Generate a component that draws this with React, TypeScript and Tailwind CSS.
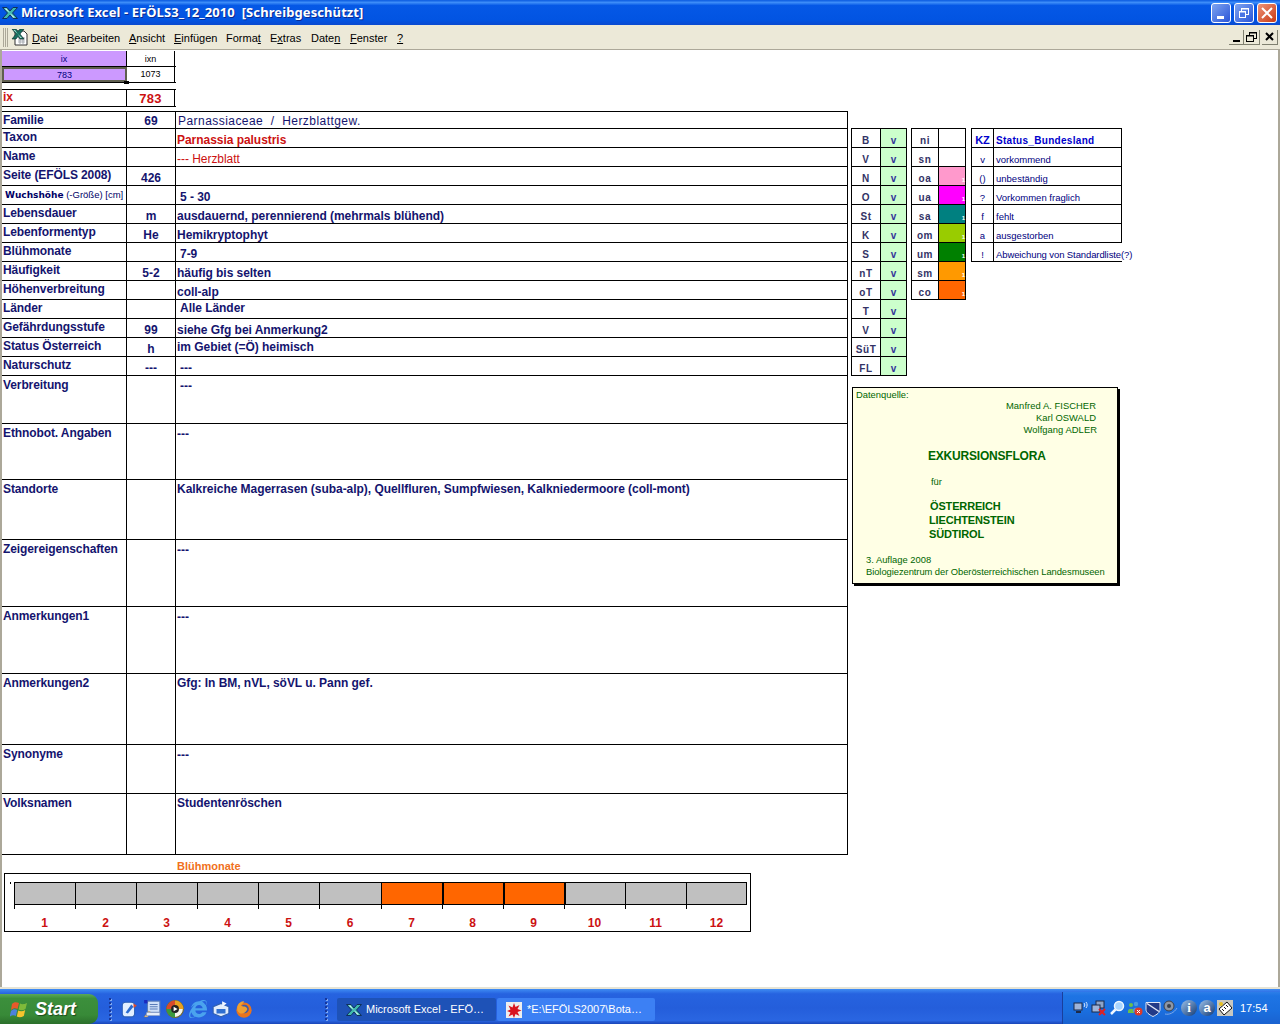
import React from "react";
import { FaInternetExplorer } from "react-icons/fa";

const XLogo = ({ s = 16 }: { s?: number }) => (
  <svg width={s} height={s} viewBox="0 0 16 16">
    <path d="M0.5 2.500h4.500l3 3.500 3-3.500h4.500l-5 5.500 5 5.500h-4.500l-3-3.500-3 3.500H.5l5-5.500z" fill="#3fb8ae" stroke="#10305c" strokeWidth="1" />
    <path d="M2.500 3.500h2l6.500 9h2z" fill="#dff6f2" />
  </svg>
);

const Flag = () => (
  <svg width="20" height="20" viewBox="0 0 20 20">
    <path d="M2 5c2-2 4-2 7-1l-1.500 6c-2-1-4-1-6.500 1z" fill="#e8592b" />
    <path d="M10 4.500c2 1 4 1 7-.5l-1.500 6c-2.500 1.500-5 1.500-7 .5z" fill="#7fba3a" />
    <path d="M1 12c2-2 4-2 6.200-1l-1.400 6c-2-1-4-1-6.300 1z" fill="#4c82dc" />
    <path d="M8.200 11.500c2 1 4.500 1 7-.5l-1.400 6c-2.500 1.500-5 1.500-7 .5z" fill="#f6c42e" />
  </svg>
);

const Grip = () => (
  <div className="flex flex-col gap-[2px] w-[3px]">
    {[0, 1, 2, 3, 4, 5].map((i) => (
      <div key={i} className="w-[2px] h-[2px] bg-[#17389c] shadow-[1px_1px_0_#7fa8f0]" />
    ))}
  </div>
);

const Quick = () => (
  <div className="flex items-center gap-[5px]">
    <svg width="18" height="18" viewBox="0 0 16 16"><rect x="2" y="2" width="11" height="13" rx="3" fill="#e2efff" stroke="#2b5fb8" /><path d="M5 11l5-7 2 2-5 6z" fill="#2b6cd0" /><path d="M12 3l3 2-3 2z" fill="#e04a2a" /></svg>
    <svg width="18" height="18" viewBox="0 0 16 16"><rect x="4" y="1" width="11" height="10" fill="#cfe0f8" stroke="#5a7cb8" /><path d="M6 4h7M6 6h7M6 8h7" stroke="#5a7cb8" /><rect x="1" y="0" width="3" height="3" fill="#1a2ac0" /><path d="M1 15l4-5 2 1-3 4z" fill="#f0d8a8" stroke="#a07a40" strokeWidth=".5" /><rect x="3" y="11" width="12" height="3" fill="#e6eefa" stroke="#6b86b8" strokeWidth=".5" /></svg>
    <svg width="18" height="18" viewBox="0 0 16 16"><circle cx="8" cy="8" r="7.500" fill="#f4f4ea" stroke="#706428" /><path d="M8 .5a7.500 7.500 0 0 1 7.500 7.500H11a3 3 0 0 0-3-3z" fill="#e8a020" /><path d="M8 15.500A7.500 7.500 0 0 1 .5 8H5a3 3 0 0 0 3 3z" fill="#3a9a3c" /><path d="M.5 8A7.500 7.500 0 0 1 8 .5V5a3 3 0 0 0-3 3z" fill="#d84a2c" /><circle cx="8" cy="8" r="3.500" fill="#222" /><path d="M6.800 6l3.500 2-3.500 2z" fill="#fff" /></svg>
    <FaInternetExplorer size={18} color="#4aa3ee" />
    <svg width="18" height="18" viewBox="0 0 16 16"><path d="M1 6l7-3 7 3v6l-7 3-7-3z" fill="#e2edfc" stroke="#2f5fb0" /><path d="M4 8h8v4H4z" fill="#2f6fd0" /><path d="M9 1l4 2-4 3z" fill="#f2f6ff" /></svg>
    <svg width="18" height="18" viewBox="0 0 16 16"><circle cx="8" cy="9" r="6.800" fill="#e8741e" /><circle cx="8.500" cy="8" r="3.800" fill="#3d5ba8" /><path d="M2 6c1-4 4-5 6-5 0 2-2 2-3 4 2 1 5 0 6 3-1 4-7 6-9 1z" fill="#f0a030" /></svg>
  </div>
);

const Tray = () => (
  <div className="flex items-center gap-[2px]">
    <svg width="16" height="16" viewBox="0 0 16 16"><rect x="1" y="3" width="8" height="7" fill="#9fb4d8" stroke="#1d2a48" /><rect x="3" y="11" width="5" height="2" fill="#1d2a48" /><path d="M11 3c1 1 1 3 0 4M13 2c1.500 2 1.500 4 0 6" stroke="#d8e8ff" fill="none" /></svg>
    <svg width="16" height="16" viewBox="0 0 16 16"><rect x="5" y="1" width="8" height="7" fill="#8ea4c8" stroke="#1d2a48" /><rect x="1" y="5" width="8" height="7" fill="#9fb4d8" stroke="#1d2a48" /><path d="M8 9l6 6M14 9l-6 6" stroke="#e02020" strokeWidth="2" /></svg>
    <svg width="16" height="16" viewBox="0 0 16 16"><circle cx="10" cy="6" r="4.500" fill="#a8d4ff" stroke="#f0f8ff" strokeWidth="1.500" /><path d="M6.500 9.500L2 14" stroke="#f0f8ff" strokeWidth="2.500" /></svg>
    <svg width="16" height="16" viewBox="0 0 16 16"><circle cx="4" cy="5" r="2" fill="#6cc04a" /><path d="M1 11c0-3 6-3 6 0v2H1z" fill="#6cc04a" /><circle cx="9" cy="4" r="2.200" fill="#4a9ade" /><path d="M6 10c0-3 6-3 6 0v2H6z" fill="#4a9ade" /><circle cx="11.500" cy="11.500" r="4" fill="#dd3a2a" /><path d="M10 10l3 3M13 10l-3 3" stroke="#fff" /></svg>
    <svg width="16" height="17" viewBox="0 0 16 16"><path d="M1 2h14v7c0 3-3 5-7 7-4-2-7-4-7-7z" fill="#223a88" stroke="#dfe6f5" /><path d="M2 3l12 8" stroke="#dfe6f5" strokeWidth="1.500" /></svg>
    <svg width="16" height="16" viewBox="0 0 16 16"><circle cx="6" cy="6" r="5" fill="#8e96a4" stroke="#39414e" /><circle cx="6" cy="6" r="2" fill="#39414e" /><path d="M2 14c4 1 9-1 12-6" stroke="#7fa8e8" fill="none" /></svg>
    <div className="w-[16px] h-[16px] rounded-full bg-[linear-gradient(135deg,#9cc0e8,#123a74)] text-white text-[13px] leading-[16px] text-center font-bold font-['Liberation_Serif',serif]">i</div>
    <div className="w-[16px] h-[16px] rounded-full bg-[linear-gradient(135deg,#9cc0e8,#123a74)] text-white text-[13px] leading-[16px] text-center font-bold">a</div>
    <svg width="16" height="16" viewBox="0 0 16 16"><rect width="16" height="16" fill="#c8c8c0" /><path d="M2 9l8-7 5 6-8 7z" fill="#fff" stroke="#111" /><path d="M5 9l2 2M7 7l2 2M9 5l2 2" stroke="#111" /><circle cx="4" cy="4" r="2" fill="#e8c020" /></svg>
  </div>
);

const L = "text-[#14146e] font-bold text-[12px]";

type Row = { h: number; label: React.ReactNode; mid?: string; val: string; cls?: string; top?: boolean; big?: boolean };

const rows: Row[] = [
  { h: 17, label: "Familie", mid: "69", val: "Parnassiaceae  /  Herzblattgew.", cls: "font-normal tracking-[0.45px] pl-[2px] pt-[2px]", top: true },
  { h: 19, label: "Taxon", val: "Parnassia palustris", cls: "text-[#cc1111]" },
  { h: 19, label: "Name", val: "--- Herzblatt", cls: "text-[#cc1111] font-normal" },
  { h: 19, label: "Seite (EFÖLS 2008)", mid: "426", val: "" },
  {
    h: 19,
    label: (
      <span className="pl-[2px] block tracking-normal">
        <span className="font-['DejaVu_Sans',sans-serif] font-bold text-[9px] text-[#000066]">Wuchshöhe</span>
        <span className="font-normal text-[9.500px] text-[#000066]"> (-Größe) [cm]</span>
      </span>
    ),
    val: "5 - 30",
    cls: "pl-[4px]",
  },
  { h: 19, label: "Lebensdauer", mid: "m", val: "ausdauernd, perennierend (mehrmals blühend)" },
  { h: 19, label: "Lebenformentyp", mid: "He", val: "Hemikryptophyt" },
  { h: 19, label: "Blühmonate", val: "7-9", cls: "pl-[4px]" },
  { h: 19, label: "Häufigkeit", mid: "5-2", val: "häufig bis selten" },
  { h: 19, label: "Höhenverbreitung", val: "coll-alp" },
  { h: 19, label: "Länder", val: "Alle Länder", cls: "pl-[4px] text-[11px]", top: true },
  { h: 19, label: "Gefährdungsstufe", mid: "99", val: "siehe Gfg bei Anmerkung2" },
  { h: 19, label: "Status Österreich", mid: "h", val: "im Gebiet (=Ö) heimisch", cls: "pb-[2px]" },
  { h: 19, label: "Naturschutz", mid: "---", val: "---", cls: "pl-[4px]" },
  { h: 48, label: "Verbreitung", val: "---", cls: "pl-[4px] pt-[3px]", top: true, big: true },
  { h: 56, label: "Ethnobot. Angaben", val: "---", cls: "pt-[3px]", top: true, big: true },
  { h: 60, label: "Standorte", val: "Kalkreiche Magerrasen (suba-alp), Quellfluren, Sumpfwiesen, Kalkniedermoore (coll-mont)", cls: "pt-[2px]", top: true, big: true },
  { h: 67, label: "Zeigereigenschaften", val: "---", cls: "pt-[3px]", top: true, big: true },
  { h: 67, label: "Anmerkungen1", val: "---", cls: "pt-[3px]", top: true, big: true },
  { h: 71, label: "Anmerkungen2", val: "Gfg: In BM, nVL, söVL u. Pann gef.", cls: "pt-[2px]", top: true, big: true },
  { h: 49, label: "Synonyme", val: "---", cls: "pt-[3px]", top: true, big: true },
  { h: 61, label: "Volksnamen", val: "Studentenröschen", cls: "pt-[2px]", top: true, big: true },
];

const tA = ["B", "V", "N", "O", "St", "K", "S", "nT", "oT", "T", "V", "SüT", "FL"];
const tB: [string, string][] = [
  ["ni", ""],
  ["sn", ""],
  ["oa", "bg-[#ff99cc]"],
  ["ua", "bg-[#ff00ff]"],
  ["sa", "bg-[#008080]"],
  ["om", "bg-[#99cc00]"],
  ["um", "bg-[#008000]"],
  ["sm", "bg-[#ff9900]"],
  ["co", "bg-[#ff6600]"],
];
const tC: [string, string][] = [
  ["v", "vorkommend"],
  ["()", "unbeständig"],
  ["?", "Vorkommen fraglich"],
  ["f", "fehlt"],
  ["a", "ausgestorben"],
];

const RL = "font-bold text-[10px] tracking-[0.6px] text-[#333366]";

export default function App() {
  return (
    <div className="w-[1280px] h-[1024px] overflow-hidden flex flex-col bg-white font-['Liberation_Sans',Arial,sans-serif]">
      {/* title bar */}
      <div className="h-[25px] shrink-0 flex items-center pl-[2px] pr-[3px] bg-[linear-gradient(180deg,#0a5ae0_0%,#3c8cf8_10%,#0558e6_22%,#0254e2_80%,#0a4ad0_100%)]">
        <XLogo />
        <span className="ml-[3px] pt-[1px] text-white font-bold text-[13px] tracking-[0.09px] whitespace-pre font-['Noto_Sans',sans-serif] [text-shadow:1px_1px_0_#0a2a90]">
          Microsoft Excel - EFÖLS3_12_2010  [Schreibgeschützt]
        </span>
        <div className="ml-auto flex gap-[3px]">
          <div className="w-[20px] h-[20px] rounded-[3px] border border-white bg-[linear-gradient(135deg,#7ea4f0,#2a55d8)] flex items-end pb-[3px] pl-[5px]">
            <div className="w-[7px] h-[3px] bg-white" />
          </div>
          <div className="w-[20px] h-[20px] rounded-[3px] border border-white bg-[linear-gradient(135deg,#7ea4f0,#2a55d8)] flex items-center justify-center">
            <svg width="12" height="12" viewBox="0 0 12 12" fill="none" stroke="#fff"><rect x="3.500" y="1.500" width="7" height="6" /><rect x="1.500" y="4.500" width="6" height="6" fill="#4a74e4" /><path d="M3 2h8M1 5h7" strokeWidth="1" /></svg>
          </div>
          <div className="w-[20px] h-[20px] rounded-[3px] border border-white bg-[linear-gradient(135deg,#ee9478,#c83a14)] flex items-center justify-center">
            <svg width="12" height="12" viewBox="0 0 12 12" stroke="#fff" strokeWidth="2"><path d="M1 1l10 10M11 1L1 11" /></svg>
          </div>
        </div>
      </div>

      {/* menu bar */}
      <div className="h-[25px] shrink-0 flex items-center bg-[#ece9d8] border-b border-[#aca899] text-[11px] text-black pl-[3px] pr-[2px]">
        <div className="w-[3px] h-[19px] border-l border-r border-[#aca899] mr-[1px]" />
        <div className="w-[1px] h-[19px] bg-[#aca899] mr-[3px]" />
        <svg width="17" height="17" viewBox="0 0 17 17" className="shrink-0">
          <path d="M4 2h9l3 3v11H4z" fill="#fff" stroke="#333" />
          <path d="M7 9h7M7 11h7M7 13h7M9 8v7M12 8v7" stroke="#8a8f9a" strokeWidth=".7" />
          <path d="M1 0h4l2 2.500L9 0h4L9 5l4 5H9L7 7.500 5 10H1l4-5z" fill="#17705f" stroke="#0b2a2a" strokeWidth=".6" />
          <path d="M2.500 1h1.500l5.500 8h1.500z" fill="#bfeee2" />
        </svg>
        <div className="flex ml-[4px] pt-[3px]">
          <span className="w-[35px]"><u>D</u>atei</span>
          <span className="w-[62px]"><u>B</u>earbeiten</span>
          <span className="w-[45px]"><u>A</u>nsicht</span>
          <span className="w-[52px]"><u>E</u>infügen</span>
          <span className="w-[44px]">Forma<u>t</u></span>
          <span className="w-[41px]">E<u>x</u>tras</span>
          <span className="w-[39px]">Date<u>n</u></span>
          <span className="w-[47px]"><u>F</u>enster</span>
          <span><u>?</u></span>
        </div>
        <div className="ml-auto flex items-center">
          <div className="w-[15px] h-[15px] bg-[#ece9d8] border-r border-b border-[#808070] flex items-end justify-center pb-[2px]"><div className="w-[7px] h-[2px] bg-black" /></div>
          <div className="w-[16px] h-[15px] bg-[#ece9d8] border-r border-b border-[#808070] flex items-center justify-center">
            <svg width="11" height="10" viewBox="0 0 11 10" fill="none" stroke="#000"><rect x="3.500" y=".5" width="7" height="6" /><rect x=".5" y="3.500" width="7" height="6" fill="#ece9d8" /><path d="M3 1h8M0 4h8" /></svg>
          </div>
          <div className="w-[16px] h-[15px] ml-[2px] bg-[#ece9d8] border-r border-b border-[#808070] flex items-center justify-center">
            <svg width="9" height="9" viewBox="0 0 9 9" stroke="#000" strokeWidth="2"><path d="M1 1l7 7M8 1L1 8" /></svg>
          </div>
        </div>
      </div>

      {/* sheet */}
      <div className="h-[937px] shrink-0 flex border-l-2 border-r-2 border-[#aca899] overflow-hidden">
        <div className="w-[846px] shrink-0">
          {/* index cells */}
          <div className="relative w-[174px] h-[33px] mt-[1px] text-[9px] text-center leading-[16px]">
            <div className="flex h-[16px] border-b border-black">
              <div className="w-[125px] bg-[#cc99ff] text-[#000080] border-r border-black">ix</div>
              <div className="w-[48px] border-r border-black text-black">ixn</div>
            </div>
            <div className="flex h-[16px] border-b border-black">
              <div className="w-[125px] bg-[#cc99ff] text-[#000080] border-2 border-[#5f5f4f] leading-[12px]">783</div>
              <div className="w-[48px] border-r border-black text-black leading-[15px]">1073</div>
            </div>
            <div className="absolute left-[122px] top-[30px] w-[5px] h-[3px] bg-black" />
          </div>
          <div className="flex w-[174px] h-[18px] mt-[5px] border-t border-b border-black text-[#cc1111] font-bold text-[12px] leading-[15px]">
            <div className="w-[125px] border-r border-black pl-[1px]">ix</div>
            <div className="w-[48px] border-r border-black text-center text-[13px] leading-[18px] tracking-[0.3px]">783</div>
          </div>

          {/* main table */}
          <div className="mt-[4px] border-t border-black grid grid-cols-[125px_49px_672px]">
            {rows.map((r, i) => (
              <React.Fragment key={i}>
                <div className={`${L} leading-[15px] tracking-[-0.1px] border-b border-r border-black pl-[1px] ${r.big ? "pt-[2px]" : "pt-[1px]"} overflow-hidden whitespace-nowrap`} style={{ height: r.h }}>
                  {r.label}
                </div>
                <div className={`${L} border-b border-r border-black flex justify-center ${r.top ? "leading-[15px] items-start pt-[2px]" : "leading-[13px] items-end"}`} style={{ height: r.h }}>
                  {r.mid}
                </div>
                <div className={`${L} tracking-[-0.04px] border-b border-r border-black pl-[1px] flex whitespace-pre ${r.top ? "leading-[15px] items-start pt-[1px]" : "leading-[13px] items-end"} ${r.cls ?? ""}`} style={{ height: r.h }}>
                  {r.val}
                </div>
              </React.Fragment>
            ))}
          </div>

          {/* chart */}
          <div className="ml-[175px] mt-[4px] text-[11px] leading-[14px] font-bold text-[#f07020]">Blühmonate</div>
          <div className="relative ml-[2px] w-[747px] h-[59px] border border-black pl-[9px] pt-[8px] flex">
            <div className="absolute left-[5px] top-[8px] w-px h-[2px] bg-black" />
            {Array.from({ length: 12 }).map((_, i) => (
              <div key={i} className={i === 5 ? "w-[62px]" : "w-[61px]"}>
                <div className={`h-[23px] border-t border-b border-black ${i >= 7 && i <= 9 ? "border-l-2" : "border-l"} ${i === 11 ? "border-r" : ""} ${i >= 6 && i <= 8 ? "bg-[#ff6600]" : "bg-[#c0c0c0]"}`} />
                <div className="w-px h-[4px] bg-black" />
                <div className="mt-[7px] text-center text-[12px] leading-[15px] font-bold text-[#cc1111]">{i + 1}</div>
              </div>
            ))}
          </div>
        </div>

        {/* right side */}
        <div className="ml-[3px] pt-[78px]">
          <div className="flex items-start">
            <div className="grid grid-cols-[29px_26px] border-t border-l border-black w-[56px]">
              {tA.map((t, i) => (
                <React.Fragment key={i}>
                  <div className={`h-[19px] border-b border-r border-black text-center leading-[23px] ${RL}`}>{t}</div>
                  <div className="h-[19px] border-b border-r border-black bg-[#ccffcc] text-center text-[10px] font-bold leading-[23px] text-[#333399]">v</div>
                </React.Fragment>
              ))}
            </div>
            <div className="grid grid-cols-[27px_27px] border-t border-l border-black w-[55px] ml-[4px]">
              {tB.map(([t, c], i) => (
                <React.Fragment key={i}>
                  <div className={`h-[19px] border-b border-r border-black text-center leading-[23px] ${RL}`}>{t}</div>
                  <div className={`h-[19px] border-b border-r border-black flex items-end justify-end ${c}`}>
                    {c && <span className="text-[6px] leading-[9px] text-white font-bold">1</span>}
                  </div>
                </React.Fragment>
              ))}
            </div>
            <div className="grid grid-cols-[22px_128px] border-t border-l border-black ml-[5px] w-[151px] text-[9.500px] text-[#000080]">
              <div className="h-[19px] border-b border-r border-black text-center font-bold text-[11px] leading-[23px] text-[#0000cc]">KZ</div>
              <div className="h-[19px] border-b border-r border-black pl-[2px] font-bold text-[10px] tracking-[0.3px] leading-[23px] text-[#0000cc]">Status_Bundesland</div>
              {tC.map(([a, b]) => (
                <React.Fragment key={a}>
                  <div className="h-[19px] border-b border-r border-black text-center leading-[23px]">{a}</div>
                  <div className="h-[19px] border-b border-r border-black pl-[2px] leading-[23px]">{b}</div>
                </React.Fragment>
              ))}
              <div className="h-[19px] border-b border-r border-black text-center leading-[23px]">!</div>
              <div className="h-[19px] border-b border-black pl-[2px] leading-[23px] whitespace-nowrap tracking-[-0.1px]">Abweichung von Standardliste(?)</div>
            </div>
          </div>

          <div className="mt-[11px] ml-[1px] w-[266px] h-[197px] bg-[#ffffe5] border border-black shadow-[2px_2px_0_#000] text-[9.400px] leading-[12px] text-[#006600]">
            <div className="pl-[3px] pt-[1px]">Datenquelle:</div>
            <div className="text-right pr-[21px] mt-[-1px] tracking-[0.05px]">
              <div>Manfred A. FISCHER</div>
              <div>Karl OSWALD</div>
              <div className="mr-[-1px]">Wolfgang ADLER</div>
            </div>
            <div className="ml-[75px] mt-[13px] font-bold text-[12px] leading-[14px] tracking-[-0.2px]">EXKURSIONSFLORA</div>
            <div className="ml-[78px] mt-[13px]">für</div>
            <div className="ml-[77px] mt-[11px] font-bold text-[11px] leading-[14px] tracking-[-0.15px]">ÖSTERREICH</div>
            <div className="ml-[76px] font-bold text-[11px] leading-[14px] tracking-[-0.15px]">LIECHTENSTEIN</div>
            <div className="ml-[76px] font-bold text-[11px] leading-[14px] tracking-[-0.15px]">SÜDTIROL</div>
            <div className="ml-[13px] mt-[13px]">3. Auflage 2008</div>
            <div className="ml-[13px] whitespace-nowrap tracking-[-0.06px]">Biologiezentrum der Oberösterreichischen Landesmuseen</div>
          </div>
        </div>
      </div>

      {/* taskbar */}
      <div className="h-[37px] shrink-0 border-t-2 border-[#e6e4d6] bg-[linear-gradient(180deg,#3f8cf3_0%,#2663e0_14%,#245edb_55%,#2a66e2_90%,#1a46b8_100%)] flex items-end">
        <div className="w-[98px] h-[30px] rounded-r-[9px] bg-[linear-gradient(180deg,#5aa85a_0%,#3c8f3c_15%,#388a38_70%,#2b6f2b_100%)] flex items-center pl-[10px] shrink-0">
          <Flag />
          <span className="ml-[5px] text-white italic font-bold text-[18px] leading-none [text-shadow:1px_1px_1px_#1c4a1c]">Start</span>
        </div>
        <div className="ml-[11px] h-[30px] flex items-center"><Grip /></div>
        <div className="ml-[8px] h-[30px] flex items-center"><Quick /></div>
        <div className="ml-[72px] h-[30px] flex items-center"><Grip /></div>
        <div className="ml-[9px] mb-[3px] w-[159px] h-[23px] rounded-[2px] bg-[#1e52b7] flex items-center pl-[9px] text-white text-[11px] shrink-0 whitespace-nowrap">
          <XLogo />
          <span className="ml-[4px]">Microsoft Excel - EFÖ…</span>
        </div>
        <div className="ml-[1px] mb-[3px] w-[158px] h-[23px] rounded-[2px] bg-[#3c80f4] flex items-center pl-[9px] text-white text-[11px] shrink-0 whitespace-nowrap">
          <svg width="16" height="16" viewBox="0 0 16 16"><rect width="16" height="16" fill="#eee" /><path d="M8 1l1.500 4 4-2-2 4 4 1.500-4 1.500 2 4-4-2L8 16l-1.500-3.500-4 2 2-4L1 9l3.500-1.500-2-4 4 2z" fill="#d81420" /></svg>
          <span className="ml-[5px]">*E:\EFÖLS2007\Bota…</span>
        </div>
        <div className="ml-auto w-[218px] h-[32px] border-l border-[#1a3f9c] bg-[linear-gradient(180deg,#2c7ee8_0%,#1e74e4_12%,#1a6ede_60%,#1a62d0_100%)] flex items-center pl-[10px] shrink-0">
          <Tray />
          <span className="ml-[7px] text-white text-[11px]">17:54</span>
        </div>
      </div>
    </div>
  );
}
